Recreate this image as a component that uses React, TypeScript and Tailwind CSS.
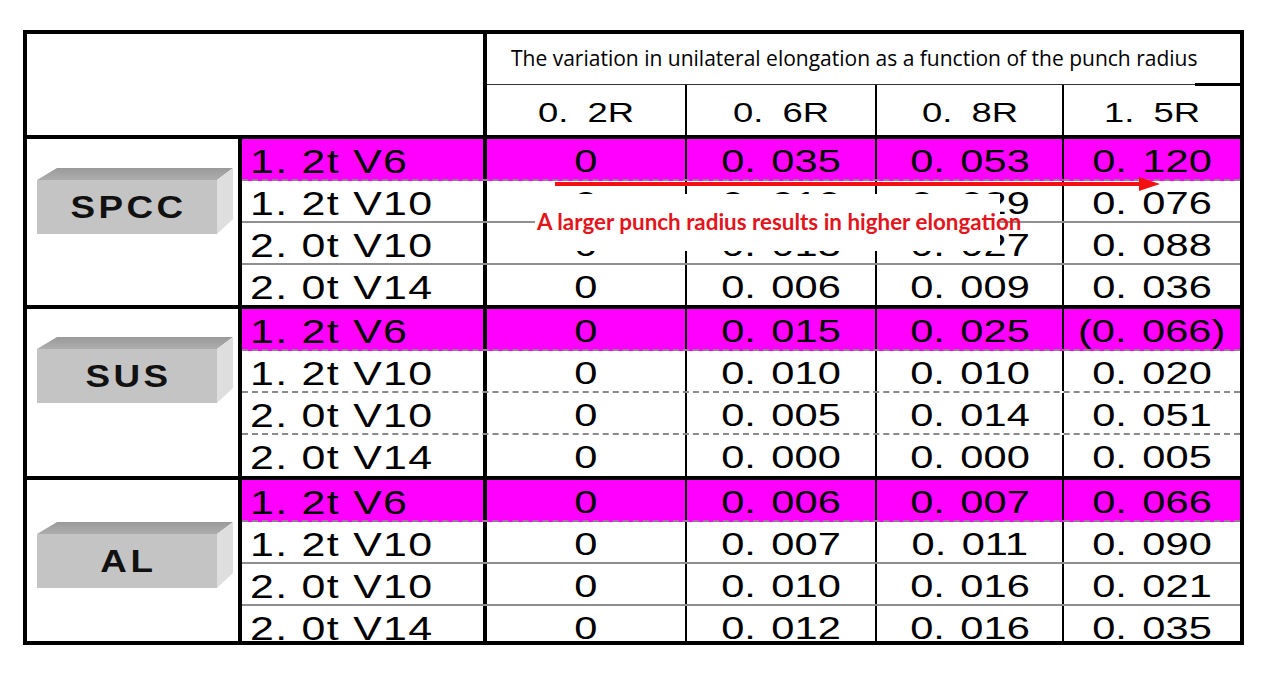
type Row = { t: string; v: string[]; hl?: boolean };
type Group = { name: string; pt: string; dashed?: boolean; rows: Row[]; heights: string[] };

const groups: Group[] = [
  {
    name: 'SPCC',
    pt: 'pt-[29px]',
    heights: ['h-[42px]', 'h-[42px]', 'h-[42px]', 'h-[40px]'],
    rows: [
      { t: '1. 2t V6', v: ['0', '0. 035', '0. 053', '0. 120'], hl: true },
      { t: '1. 2t V10', v: ['0', '0. 010', '0. 029', '0. 076'] },
      { t: '2. 0t V10', v: ['0', '0. 013', '0. 027', '0. 088'] },
      { t: '2. 0t V14', v: ['0', '0. 006', '0. 009', '0. 036'] },
    ],
  },
  {
    name: 'SUS',
    pt: 'pt-[28px]',
    dashed: true,
    heights: ['h-[42px]', 'h-[42px]', 'h-[42px]', 'h-[41px]'],
    rows: [
      { t: '1. 2t V6', v: ['0', '0. 015', '0. 025', '(0. 066)'], hl: true },
      { t: '1. 2t V10', v: ['0', '0. 010', '0. 010', '0. 020'] },
      { t: '2. 0t V10', v: ['0', '0. 005', '0. 014', '0. 051'] },
      { t: '2. 0t V14', v: ['0', '0. 000', '0. 000', '0. 005'] },
    ],
  },
  {
    name: 'AL',
    pt: 'pt-[42px]',
    heights: ['h-[42px]', 'h-[42px]', 'h-[42px]', 'h-[35px]'],
    rows: [
      { t: '1. 2t V6', v: ['0', '0. 006', '0. 007', '0. 066'], hl: true },
      { t: '1. 2t V10', v: ['0', '0. 007', '0. 011', '0. 090'] },
      { t: '2. 0t V10', v: ['0', '0. 010', '0. 016', '0. 021'] },
      { t: '2. 0t V14', v: ['0', '0. 012', '0. 016', '0. 035'] },
    ],
  },
];

const colW = ['w-[200px] border-r-2 border-black', 'w-[190px] border-r-2 border-black', 'w-[187px] border-r-2 border-black', 'flex-1'];
const radii = ['0. 2R', '0. 6R', '0. 8R', '1. 5R'];

function Block({ name }: { name: string }) {
  return (
    <div className="relative w-[196px] h-[66px] ml-[10px]">
      <svg className="absolute inset-0" width="196" height="66" viewBox="0 0 196 66">
        <defs>
          <linearGradient id="top" x1="0" y1="0" x2="0" y2="1">
            <stop offset="0" stopColor="#9a9a9a" />
            <stop offset="1" stopColor="#adadad" />
          </linearGradient>
        </defs>
        <polygon points="0,12 20,0 196,0 180,12" fill="url(#top)" />
        <polygon points="180,12 196,0 196,51 180,66" fill="#dedede" />
        <rect x="0" y="12" width="180" height="54" fill="#c4c4c4" />
      </svg>
      <div className="absolute left-0 top-[12px] w-[180px] h-[54px] flex items-center justify-center pl-[3px] font-['Liberation_Sans',Arial,sans-serif] font-bold text-[32px] text-[#111]">
        <span className="inline-block scale-x-[1.15] tracking-[3px]">{name}</span>
      </div>
    </div>
  );
}

export default function App() {
  return (
    <div className="w-[1267px] h-[682px] bg-white overflow-hidden pt-[30px] font-['Liberation_Sans',Arial,sans-serif] text-black">
      <div className="relative ml-[23px] w-[1221px] border-4 border-black">
        {/* header */}
        <div className="flex border-b-4 border-black">
          <div className="w-[460px] border-r-4 border-black" />
          <div className="flex-1 flex flex-col">
            <div className="h-[51px] border-b border-[#333] flex items-center pl-[24px] font-['Open_Sans',sans-serif] font-medium text-[21px] text-black whitespace-nowrap">
              The variation in unilateral elongation as a function of the punch radius
            </div>
            <div className="flex h-[50px]">
              {radii.map((r, i) => (
                <div key={r} className={`${colW[i]} h-[50px] text-center text-[28px] leading-[50px] pt-[3px] whitespace-nowrap [word-spacing:7px]`}>
                  <span className="inline-block scale-x-[1.3]">{r}</span>
                </div>
              ))}
            </div>
          </div>
        </div>

        {groups.map((g, gi) => (
          <div key={g.name} className={`flex ${gi < groups.length - 1 ? 'border-b-4 border-black' : ''}`}>
            <div className={`w-[215px] border-r-4 border-black ${g.pt}`}>
              <Block name={g.name} />
            </div>
            <div className="flex-1 flex flex-col">
              {g.rows.map((r, ri) => {
                const last = ri === g.rows.length - 1;
                const line = last
                  ? ''
                  : r.hl
                  ? 'border-b-2 border-dashed border-[#9a7a9a]'
                  : g.dashed
                  ? 'border-b-2 border-dashed border-[#8a8a8a]'
                  : 'border-b-2 border-[#8f8f8f]';
                return (
                  <div key={ri} className={`flex ${g.heights[ri]} overflow-hidden ${line} ${r.hl ? 'bg-[#ff00ff]' : 'bg-white'}`}>
                    <div className="w-[245px] border-r-4 border-black pl-[8px] text-[33px] leading-[45px] whitespace-nowrap">
                      <span className="inline-block origin-left scale-x-[1.3] tracking-[1px]">{r.t}</span>
                    </div>
                    {r.v.map((v, i) => (
                      <div key={i} className={`${colW[i]} text-center text-[32px] leading-[45px] whitespace-nowrap [word-spacing:3px]`}>
                        <span className="inline-block scale-x-[1.3]">{v}</span>
                      </div>
                    ))}
                  </div>
                );
              })}
            </div>
          </div>
        ))}

        {/* thick tick at the end of the title line */}
        <div className="absolute left-[1168px] top-[49px] w-[45px] h-[3px] bg-black" />

        {/* annotation */}
        <div className="absolute left-[508px] top-[160px] w-[465px] h-[57px] bg-white" />
        <div className="absolute left-[510px] top-[174px] leading-[28px] text-[22.4px] font-bold text-[#e3141b] font-['Lato',sans-serif] whitespace-nowrap">
          A larger punch radius results in higher elongation
        </div>
        <svg className="absolute left-[528px] top-[142px]" width="605" height="16" viewBox="0 0 605 16">
          <rect x="0" y="6" width="590" height="4" fill="#f21010" />
          <polygon points="584,1 605,8 584,15" fill="#f21010" />
        </svg>
      </div>
    </div>
  );
}
